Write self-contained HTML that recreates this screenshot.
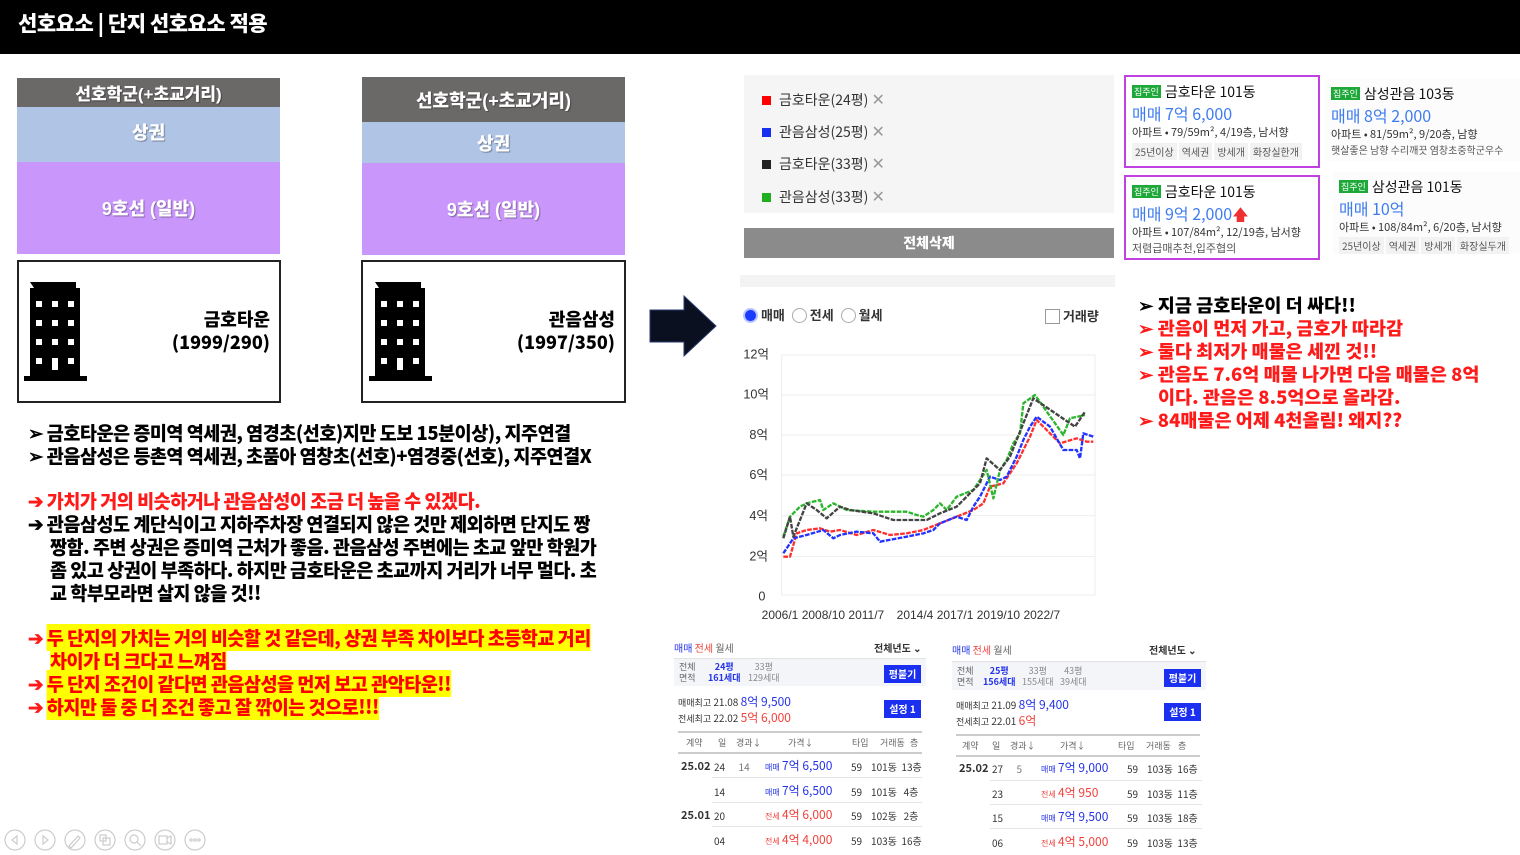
<!DOCTYPE html>
<html><head><meta charset="utf-8"><style>
*{margin:0;padding:0;box-sizing:border-box}
body{width:1520px;height:855px;background:#fff;position:relative;overflow:hidden;font-family:"Liberation Sans","Noto Sans CJK KR",sans-serif}
.a{position:absolute}
.k{font-family:"Noto Sans CJK KR","Liberation Sans",sans-serif}
.bx{color:#fff;font-weight:900;text-align:center;display:flex;align-items:center;justify-content:center;font-size:18px;text-shadow:1px 1px 1px rgba(0,0,0,.35)}
.ln{position:absolute;white-space:nowrap;font-weight:900;font-size:19px;transform:scaleX(.975);transform-origin:left center;line-height:23px;font-family:"Noto Sans CJK KR",sans-serif;letter-spacing:-0.5px}
.hl{background:#ffff00;color:#ff0000}
.r{color:#ff1a1a}
.rt{position:absolute;white-space:nowrap;font-weight:900;font-size:18px;transform:scaleX(1.03);transform-origin:left center;font-family:"Noto Sans CJK KR",sans-serif;line-height:23px}
.card{position:absolute;font-family:"Noto Sans CJK KR",sans-serif;padding:5px 6px;font-size:11px;color:#333}
.tag{display:inline-block;background:#1fa83a;color:#fff;font-size:9px;padding:0 2px;margin-right:4px;vertical-align:2px}
.pr{color:#3d7bf0;font-size:16px;line-height:22px}
.chip{display:inline-block;background:#f2f2f2;font-size:10px;padding:1px 3px;margin-right:2px;color:#555}
.tb{position:absolute;font-family:"Noto Sans CJK KR",sans-serif;font-size:10px;color:#333}
.tb .row{position:absolute;left:0;white-space:nowrap}
.tb .h{position:absolute;top:100px;font-size:9px;color:#666;white-space:nowrap}
.blue{color:#2433e8}.red2{color:#f0413a}
.btn{position:absolute;background:#1a2ff0;color:#fff;font-weight:bold;font-size:10px;text-align:center}
.fl{position:absolute;left:762px;font-size:14px;line-height:20px;height:20px;color:#333;white-space:nowrap;font-family:"Noto Sans CJK KR",sans-serif}
.fl i{display:inline-block;width:9px;height:9px;margin-right:8px}
.fl b{color:#999;font-weight:normal;font-size:16px;line-height:20px}
</style></head><body>
<div class="a" style="left:0;top:0;width:1520px;height:54px;background:#000"></div>
<div class="a k" style="left:18px;top:8px;color:#fff;font-size:21px;font-weight:900;letter-spacing:-0.5px">선호요소 | 단지 선호요소 적용</div>

<div class="a bx" style="left:17px;top:78px;width:263px;height:29px;background:#6b6868;font-size:17px">선호학군(+초교거리)</div>
<div class="a bx" style="left:17px;top:107px;width:263px;height:55px;background:#b0c5e6;align-items:flex-start;padding-top:12px">상권</div>
<div class="a bx" style="left:17px;top:162px;width:263px;height:92px;background:#c996fb">9호선 (일반)</div>
<div class="a" style="left:17px;top:260px;width:264px;height:143px;border:2px solid #222"></div>
<div class="a bx" style="left:362px;top:77px;width:263px;height:45px;background:#6b6868">선호학군(+초교거리)</div>
<div class="a bx" style="left:362px;top:122px;width:263px;height:41px;background:#b0c5e6">상권</div>
<div class="a bx" style="left:362px;top:163px;width:263px;height:92px;background:#c996fb">9호선 (일반)</div>
<div class="a" style="left:361px;top:260px;width:265px;height:143px;border:2px solid #222"></div>

<svg class="a" style="left:0;top:0" width="720" height="410">
<g id="bld">
<path d="M30 282 h46 v6 h4 v88 h7 v5 h-63 v-5 h6 v-88 h4z" fill="#000"/>
<g fill="#fff">
<rect x="36" y="301" width="6" height="6"/><rect x="52" y="301" width="6" height="6"/><rect x="68" y="301" width="6" height="6"/>
<rect x="36" y="320" width="6" height="6"/><rect x="52" y="320" width="6" height="6"/><rect x="68" y="320" width="6" height="6"/>
<rect x="36" y="339" width="6" height="6"/><rect x="52" y="339" width="6" height="6"/><rect x="68" y="339" width="6" height="6"/>
<rect x="36" y="358" width="6" height="6"/><rect x="52" y="358" width="6" height="12"/><rect x="68" y="358" width="6" height="6"/>
</g></g>
<use href="#bld" x="345" y="0"/>
<path d="M650 310 h34 v-14 l32 30 l-32 30 v-14 h-34z" fill="#0b1020" stroke="#2a3a70" stroke-width="1"/>
</svg>
<div class="a k" style="left:150px;top:308px;width:120px;text-align:right;font-weight:900;font-size:18px;line-height:23px">금호타운<br>(1999/290)</div>
<div class="a k" style="left:495px;top:308px;width:120px;text-align:right;font-weight:900;font-size:18px;line-height:23px">관음삼성<br>(1997/350)</div>

<div class="ln" style="left:28px;top:421px">➢ 금호타운은 증미역 역세권, 염경초(선호)지만 도보 15분이상), 지주연결</div>
<div class="ln" style="left:28px;top:444px">➢ 관음삼성은 등촌역 역세권, 초품아 염창초(선호)+염경중(선호), 지주연결X</div>
<div class="ln r" style="left:28px;top:489px">➔ 가치가 거의 비슷하거나 관음삼성이 조금 더 높을 수 있겠다.</div>
<div class="ln" style="left:28px;top:512px">➔ 관음삼성도 계단식이고 지하주차장 연결되지 않은 것만 제외하면 단지도 짱</div>
<div class="ln" style="left:50px;top:535px">짱함. 주변 상권은 증미역 근처가 좋음. 관음삼성 주변에는 초교 앞만 학원가</div>
<div class="ln" style="left:50px;top:558px">좀 있고 상권이 부족하다. 하지만 금호타운은 초교까지 거리가 너무 멀다. 초</div>
<div class="ln" style="left:50px;top:581px">교 학부모라면 살지 않을 것!!</div>
<div class="ln r" style="left:28px;top:626px">➔ <span class="hl">두 단지의 가치는 거의 비슷할 것 같은데, 상권 부족 차이보다 초등학교 거리</span></div>
<div class="ln r" style="left:50px;top:649px"><span class="hl">차이가 더 크다고 느껴짐</span></div>
<div class="ln r" style="left:28px;top:672px">➔ <span class="hl">두 단지 조건이 같다면 관음삼성을 먼저 보고 관악타운!!</span></div>
<div class="ln r" style="left:28px;top:695px">➔ <span class="hl">하지만 둘 중 더 조건 좋고 잘 깎이는 것으로!!!</span></div>

<div class="a" style="left:744px;top:75px;width:370px;height:138px;background:#f5f5f5"></div>
<div class="fl" style="top:88px"><i style="background:#f00"></i>금호타운(24평) <b>✕</b></div>
<div class="fl" style="top:120px"><i style="background:#1530f0"></i>관음삼성(25평) <b>✕</b></div>
<div class="fl" style="top:152px"><i style="background:#222"></i>금호타운(33평) <b>✕</b></div>
<div class="fl" style="top:185px"><i style="background:#1fb01f"></i>관음삼성(33평) <b>✕</b></div>
<div class="a k" style="left:744px;top:228px;width:370px;height:30px;background:#8b8b8b;color:#fff;font-weight:900;font-size:14px;text-align:center;line-height:30px">전체삭제</div>
<div class="a" style="left:740px;top:275px;width:375px;height:12px;background:#f3f3f3"></div>

<div class="card" style="left:1124px;top:75px;width:196px;height:93px;border:2px solid #c040e0">
<div style="font-size:14px;color:#111"><span class="tag">집주인</span>금호타운 101동</div>
<div class="pr">매매 7억 6,000</div>
<div>아파트 • 79/59m², 4/19층, 남서향</div>
<div style="margin-top:3px"><span class="chip">25년이상</span><span class="chip">역세권</span><span class="chip">방세개</span><span class="chip">화장실한개</span></div></div>
<div class="card" style="left:1124px;top:175px;width:196px;height:85px;border:2px solid #c040e0">
<div style="font-size:14px;color:#111"><span class="tag">집주인</span>금호타운 101동</div>
<div class="pr">매매 9억 2,000<span style="color:#f03030">🡅</span></div>
<div>아파트 • 107/84m², 12/19층, 남서향</div>
<div style="color:#555">저렴급매추천,입주협의</div></div>
<div class="card" style="left:1325px;top:79px;width:195px;height:82px;background:#fcfcfc">
<div style="font-size:14px;color:#111"><span class="tag">집주인</span>삼성관음 103동</div>
<div class="pr">매매 8억 2,000</div>
<div>아파트 • 81/59m², 9/20층, 남향</div>
<div style="color:#555;font-size:10px;white-space:nowrap">햇살좋은 남향 수리깨끗 염창초중학군우수</div></div>
<div class="card" style="left:1333px;top:172px;width:187px;height:82px;background:#fcfcfc">
<div style="font-size:14px;color:#111"><span class="tag">집주인</span>삼성관음 101동</div>
<div class="pr">매매 10억</div>
<div>아파트 • 108/84m², 6/20층, 남서향</div>
<div style="margin-top:2px;white-space:nowrap"><span class="chip">25년이상</span><span class="chip">역세권</span><span class="chip">방세개</span><span class="chip">화장실두개</span></div></div>

<div class="a k" style="left:743px;top:305px;font-size:13px;font-weight:bold;color:#333;white-space:nowrap">
<span style="display:inline-block;width:15px;height:15px;border-radius:50%;background:#1a3cff;border:2px solid #b8c4ff;vertical-align:-3px"></span> 매매
<span style="display:inline-block;width:15px;height:15px;border-radius:50%;border:1px solid #aaa;vertical-align:-3px;margin-left:4px"></span> 전세
<span style="display:inline-block;width:15px;height:15px;border-radius:50%;border:1px solid #aaa;vertical-align:-3px;margin-left:4px"></span> 월세</div>
<div class="a k" style="left:1045px;top:306px;font-size:13px;font-weight:bold;color:#333"><span style="display:inline-block;width:15px;height:15px;border:1px solid #999;vertical-align:-3px"></span> 거래량</div>
<svg class="a" style="left:740px;top:290px" width="380" height="340" viewBox="0 0 1140 1020">
<rect x="125" y="195" width="940" height="720" fill="none" stroke="#eee" stroke-width="3"/>
<g stroke="#eee" stroke-width="3"><line x1="125" x2="1065" y1="315" y2="315"/><line x1="125" x2="1065" y1="435" y2="435"/><line x1="125" x2="1065" y1="555" y2="555"/><line x1="125" x2="1065" y1="677" y2="677"/><line x1="125" x2="1065" y1="800" y2="800"/></g>
<g font-family="Liberation Sans,Noto Sans CJK KR,sans-serif" font-size="38" fill="#333">
<text x="10" y="205">12억</text><text x="10" y="325">10억</text><text x="28" y="447">8억</text><text x="28" y="567">6억</text><text x="28" y="690">4억</text><text x="28" y="812">2억</text><text x="55" y="932">0</text>
<text x="65" y="987" font-size="36">2006/1 2008/10 2011/7</text><text x="470" y="987" font-size="36">2014/4 2017/1 2019/10 2022/7</text></g>
<g fill="none" stroke-width="7" stroke-linejoin="round" stroke-dasharray="14 4">
<polyline stroke="#ff3030" points="130,800 150,800 170,730 200,720 240,715 270,725 300,720 350,735 400,720 450,735 500,730 550,720 600,700 650,680 700,660 730,640 750,590 790,580 830,520 850,480 870,440 890,390 960,460 1010,445 1040,455 1060,455"/>
<polyline stroke="#2233ff" points="130,790 160,745 200,735 250,720 280,745 300,735 350,725 400,730 420,755 500,740 550,730 580,720 600,700 650,680 680,690 700,650 720,620 750,560 780,570 800,560 830,500 850,450 870,410 890,380 930,410 970,480 1010,480 1020,505 1030,430 1060,440"/>
<polyline stroke="#2db52d" points="130,740 150,680 180,650 200,640 240,630 250,660 280,640 300,650 320,660 400,665 500,665 530,675 550,680 580,660 600,640 620,660 650,620 700,600 740,540 760,625 780,540 800,510 820,460 840,430 850,340 885,315 970,435 990,385 1035,375"/>
<polyline stroke="#444" points="130,745 150,680 160,740 200,640 230,660 260,685 300,650 330,660 400,670 460,690 520,690 560,690 600,670 650,650 690,610 720,580 740,505 780,540 810,500 880,325 1005,410 1035,365"/>
</g>
</svg>

<div class="rt" style="left:1138px;top:294px">➢ 지금 금호타운이 더 싸다!!</div>
<div class="rt r" style="left:1138px;top:317px">➢ 관음이 먼저 가고, 금호가 따라감</div>
<div class="rt r" style="left:1138px;top:340px">➢ 둘다 최저가 매물은 세낀 것!!</div>
<div class="rt r" style="left:1138px;top:363px">➢ 관음도 7.6억 매물 나가면 다음 매물은 8억</div>
<div class="rt r" style="left:1158px;top:386px">이다. 관음은 8.5억으로 올라감.</div>
<div class="rt r" style="left:1138px;top:409px">➢ 84매물은 어제 4천올림! 왜지??</div>

<div class="tb" style="left:674px;top:636px;width:252px;height:218px">
<div class="row" style="top:4px"><span class="blue">매매</span> <span class="red2">전세</span> <span style="color:#666">월세</span></div>
<div class="row" style="top:4px;left:200px;font-weight:bold">전체년도 ⌄</div>
<div style="position:absolute;top:22px;left:0;width:252px;height:28px;background:#f4f5f9;border-top:1px solid #e3e3e3"></div>
<div class="row" style="top:25px;left:5px;color:#666;font-size:9px;line-height:11px">전체<br>면적</div>
<div class="row" style="top:25px;left:34px;font-size:9px;line-height:11px;text-align:center"><span class="blue"><b>24평<br>161세대</b></span></div>
<div class="row" style="top:25px;left:74px;font-size:9px;line-height:11px;color:#888;text-align:center">33평<br>129세대</div>
<div class="btn" style="left:210px;top:29px;width:37px;height:18px;line-height:18px">평붙기</div>
<div class="row" style="top:58px;left:4px;line-height:15px"><span style="font-size:9px">매매최고</span> 21.08 <span class="blue" style="font-size:12px">8억 9,500</span><br><span style="font-size:9px">전세최고</span> 22.02 <span class="red2" style="font-size:12px">5억 6,000</span></div>
<div class="btn" style="left:210px;top:64px;width:37px;height:18px;line-height:18px">설정 1</div>
<div style="position:absolute;top:95px;left:4px;width:244px;border-top:2px solid #ccc"></div>
<span class="h" style="left:12px">계약</span><span class="h" style="left:44px">일</span><span class="h" style="left:62px">경과↓</span><span class="h" style="left:114px">가격↓</span><span class="h" style="left:178px">타입</span><span class="h" style="left:206px">거래동</span><span class="h" style="left:236px">층</span>
<div style="position:absolute;top:116px;left:4px;width:244px;border-top:2px solid #ccc"></div>
<div class="row" style="top:122px;left:7px;font-weight:bold;font-size:11px">25.02</div>
<div class="row" style="top:123px;left:40px">24 &nbsp;&nbsp;&nbsp;&nbsp;&nbsp;<span style="color:#777">14</span></div>
<div class="row" style="top:121px;left:91px"><span class="blue" style="font-size:8px">매매</span> <span class="blue" style="font-size:12px">7억 6,500</span></div>
<div class="row" style="top:123px;left:177px">59 &nbsp;&nbsp;&nbsp;101동 &nbsp;13층</div>
<div style="position:absolute;top:141px;left:38px;width:210px;border-top:1px solid #e5e5e5"></div>
<div class="row" style="top:148px;left:40px">14</div>
<div class="row" style="top:146px;left:91px"><span class="blue" style="font-size:8px">매매</span> <span class="blue" style="font-size:12px">7억 6,500</span></div>
<div class="row" style="top:148px;left:177px">59 &nbsp;&nbsp;&nbsp;101동 &nbsp;&nbsp;4층</div>
<div style="position:absolute;top:166px;left:38px;width:210px;border-top:1px solid #e5e5e5"></div>
<div class="row" style="top:171px;left:7px;font-weight:bold;font-size:11px">25.01</div>
<div class="row" style="top:172px;left:40px">20</div>
<div class="row" style="top:170px;left:91px"><span class="red2" style="font-size:8px">전세</span> <span class="red2" style="font-size:12px">4억 6,000</span></div>
<div class="row" style="top:172px;left:177px">59 &nbsp;&nbsp;&nbsp;102동 &nbsp;&nbsp;2층</div>
<div style="position:absolute;top:190px;left:38px;width:210px;border-top:1px solid #e5e5e5"></div>
<div class="row" style="top:197px;left:40px">04</div>
<div class="row" style="top:195px;left:91px"><span class="red2" style="font-size:8px">전세</span> <span class="red2" style="font-size:12px">4억 4,000</span></div>
<div class="row" style="top:197px;left:177px">59 &nbsp;&nbsp;&nbsp;103동 &nbsp;16층</div>
</div>

<div class="tb" style="left:952px;top:638px;width:254px;height:217px">
<div class="row" style="top:4px"><span class="blue">매매</span> <span class="red2">전세</span> <span style="color:#666">월세</span></div>
<div class="row" style="top:4px;left:197px;font-weight:bold">전체년도 ⌄</div>
<div style="position:absolute;top:23px;left:0;width:254px;height:29px;background:#f4f5f9;border-top:1px solid #e3e3e3"></div>
<div class="row" style="top:27px;left:5px;color:#666;font-size:9px;line-height:11px">전체<br>면적</div>
<div class="row" style="top:27px;left:31px;font-size:9px;line-height:11px;text-align:center"><span class="blue"><b>25평<br>156세대</b></span></div>
<div class="row" style="top:27px;left:70px;font-size:9px;line-height:11px;color:#888;text-align:center">33평<br>155세대</div>
<div class="row" style="top:27px;left:108px;font-size:9px;line-height:11px;color:#888;text-align:center">43평<br>39세대</div>
<div class="btn" style="left:212px;top:31px;width:37px;height:18px;line-height:18px">평붙기</div>
<div class="row" style="top:59px;left:4px;line-height:15px"><span style="font-size:9px">매매최고</span> 21.09 <span class="blue" style="font-size:12px">8억 9,400</span><br><span style="font-size:9px">전세최고</span> 22.01 <span class="red2" style="font-size:12px">6억</span></div>
<div class="btn" style="left:212px;top:65px;width:37px;height:18px;line-height:18px">설정 1</div>
<div style="position:absolute;top:96px;left:4px;width:244px;border-top:2px solid #ccc"></div>
<span class="h" style="left:10px;top:101px">계약</span><span class="h" style="left:40px;top:101px">일</span><span class="h" style="left:58px;top:101px">경과↓</span><span class="h" style="left:108px;top:101px">가격↓</span><span class="h" style="left:166px;top:101px">타입</span><span class="h" style="left:194px;top:101px">거래동</span><span class="h" style="left:226px;top:101px">층</span>
<div style="position:absolute;top:117px;left:4px;width:244px;border-top:2px solid #ccc"></div>
<div class="row" style="top:122px;left:7px;font-weight:bold;font-size:11px">25.02</div>
<div class="row" style="top:123px;left:40px">27 &nbsp;&nbsp;&nbsp;&nbsp;&nbsp;<span style="color:#777">5</span></div>
<div class="row" style="top:121px;left:89px"><span class="blue" style="font-size:8px">매매</span> <span class="blue" style="font-size:12px">7억 9,000</span></div>
<div class="row" style="top:123px;left:175px">59 &nbsp;&nbsp;&nbsp;103동 &nbsp;16층</div>
<div style="position:absolute;top:142px;left:38px;width:212px;border-top:1px solid #e5e5e5"></div>
<div class="row" style="top:148px;left:40px">23</div>
<div class="row" style="top:146px;left:89px"><span class="red2" style="font-size:8px">전세</span> <span class="red2" style="font-size:12px">4억 950</span></div>
<div class="row" style="top:148px;left:175px">59 &nbsp;&nbsp;&nbsp;103동 &nbsp;11층</div>
<div style="position:absolute;top:166px;left:38px;width:212px;border-top:1px solid #e5e5e5"></div>
<div class="row" style="top:172px;left:40px">15</div>
<div class="row" style="top:170px;left:89px"><span class="blue" style="font-size:8px">매매</span> <span class="blue" style="font-size:12px">7억 9,500</span></div>
<div class="row" style="top:172px;left:175px">59 &nbsp;&nbsp;&nbsp;103동 &nbsp;18층</div>
<div style="position:absolute;top:190px;left:38px;width:212px;border-top:1px solid #e5e5e5"></div>
<div class="row" style="top:197px;left:40px">06</div>
<div class="row" style="top:195px;left:89px"><span class="red2" style="font-size:8px">전세</span> <span class="red2" style="font-size:12px">4억 5,000</span></div>
<div class="row" style="top:197px;left:175px">59 &nbsp;&nbsp;&nbsp;103동 &nbsp;13층</div>
</div>

<svg class="a" style="left:0;top:826px" width="220" height="29">
<g fill="none" stroke="#ccc" stroke-width="1.2">
<circle cx="15" cy="14" r="10"/><path d="M17 10 l-5 4 l5 4z"/>
<circle cx="45" cy="14" r="10"/><path d="M43 10 l5 4 l-5 4z"/>
<circle cx="75" cy="14" r="10"/><path d="M69 20 l9 -10 l2 2 l-9 10z"/>
<circle cx="105" cy="14" r="10"/><rect x="100" y="9" width="6" height="6"/><rect x="103" y="12" width="7" height="7"/>
<circle cx="135" cy="14" r="10"/><circle cx="134" cy="13" r="4"/><path d="M137 16 l4 4"/>
<circle cx="165" cy="14" r="10"/><rect x="159" y="10" width="8" height="8"/><path d="M167 12 l4 -2 v8 l-4 -2"/>
<circle cx="195" cy="14" r="10"/><circle cx="191" cy="14" r="1.2"/><circle cx="195" cy="14" r="1.2"/><circle cx="199" cy="14" r="1.2"/>
</g></svg>
</body></html>
